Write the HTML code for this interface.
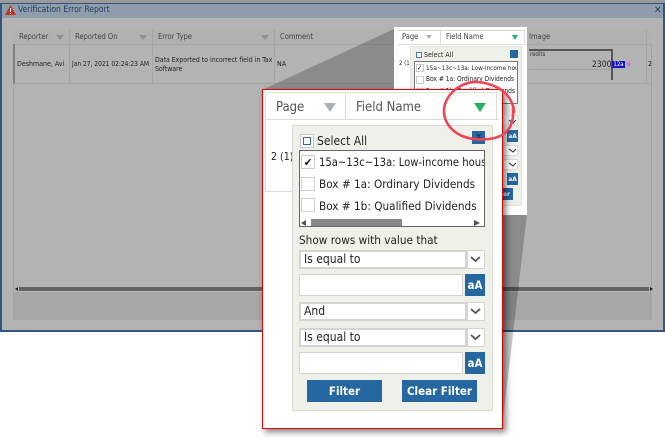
<!DOCTYPE html>
<html><head><meta charset="utf-8"><style>
html,body{margin:0;padding:0;background:#fff}
#p{position:relative;width:665px;height:438px;overflow:hidden;background:#fff;font-family:"DejaVu Sans Condensed","DejaVu Sans","Liberation Sans",sans-serif;font-stretch:condensed;color:#222}
#p div{position:absolute;box-sizing:border-box;white-space:nowrap}
.s{font-size:7.5px;color:#444}
.tri{width:0;height:0;border-left:4px solid transparent;border-right:4px solid transparent;border-top:5px solid #8e979c}
.sel{background:#fff;border:2px solid #d4d4d0;font-size:12px;line-height:15px;padding-left:3px;left:299px;width:168px;height:19px}
.arr{left:467px;width:18px;height:19px;background:#fff;border:1px solid #d4d4d0}
.inp{left:299px;width:164px;height:22px;background:#fff;border:1px solid #d4d4d0}
.aa{left:465px;width:20px;height:22px;background:#2567a0;color:#fff;font-weight:bold;font-size:11.5px;line-height:22px;text-align:center}
.btn{background:#2567a0;color:#fff;font-weight:bold;line-height:22px;text-align:center;height:22px;width:75px;top:380px;font-size:11.5px}
.cb{width:14px;height:14px;background:#fff;border:1px solid #ccc}
.saa{left:507px;width:11px;height:12px;background:#2567a0;color:#fff;font-size:6.5px;line-height:12px;text-align:center;font-weight:bold}
</style></head><body><div id="p">
<div style="left:0;top:0;width:665px;height:4px;background:#9a9a9a"></div>
<div style="left:0;top:3px;width:665px;height:329px;background:#b3b3b3;border:1px solid #33587f;border-width:1px 2px 2px 2px"></div>
<div style="left:2px;top:4px;width:661px;height:14px;background:#8f9dab"></div>
<svg style="position:absolute;left:5px;top:5px" width="11" height="10"><path d="M5.5 0L11 10H0Z" fill="#c4301c"/><rect x="5" y="3" width="1" height="4" fill="#fff"/><rect x="5" y="8" width="1" height="1" fill="#fff"/></svg>
<div style="left:18px;top:3px;line-height:14px;color:#1d3f66;font-size:8.5px">Verification Error Report</div>
<div style="left:654px;top:4px;font-size:10px;line-height:14px;color:#1d3f66;font-weight:bold">✕</div>

<div style="left:13px;top:29px;width:639px;height:291px;background:#b3b3b3;border:1px solid #a3a3a3"></div>
<div style="left:13px;top:29px;width:639px;height:16px;background:#b1b1b1;border-bottom:1px solid #a5a5a5"></div>
<div style="left:13px;top:44px;width:639px;height:40px;border-bottom:1px solid #a5a5a5;border-left:2px solid #808080"></div>
<div style="left:69px;top:29px;width:1px;height:55px;background:#a5a5a5"></div>
<div style="left:152px;top:29px;width:1px;height:55px;background:#a5a5a5"></div>
<div style="left:274px;top:29px;width:1px;height:55px;background:#a5a5a5"></div>
<div style="left:646px;top:29px;width:1px;height:55px;background:#a5a5a5"></div>
<div class="s" style="left:19px;top:32px">Reporter</div><div class="tri" style="left:56px;top:35px;border-top-color:#8b9396"></div>
<div class="s" style="left:75px;top:32px">Reported On</div><div class="tri" style="left:139px;top:35px;border-top-color:#8b9396"></div>
<div class="s" style="left:158px;top:32px">Error Type</div><div class="tri" style="left:261px;top:35px;border-top-color:#8b9396"></div>
<div class="s" style="left:280px;top:32px">Comment</div>
<div style="left:17px;top:60px;font-size:7px;color:#222">Deshmane, Avi</div>
<div style="left:72px;top:60px;font-size:6.6px;color:#222">Jan 27, 2021 02:24:23 AM</div>
<div style="left:155px;top:56px;font-size:6.9px;line-height:9px;color:#222">Data Exported to incorrect field in Tax<br>Software</div>
<div style="left:277px;top:60px;font-size:7px;color:#222">NA</div>
<div class="s" style="left:529px;top:32px">Image</div>
<div style="left:529px;top:49px;width:83px;height:2px;background:#555"></div>
<div style="left:611px;top:49px;width:2px;height:31px;background:#555"></div>
<div style="left:529px;top:69px;width:82px;height:1px;background:#a0a0a0"></div>
<div style="left:530px;top:51px;font-size:6px;color:#333">redits</div>
<div style="left:592px;top:60px;font-size:8.5px;color:#222">2300</div>
<div style="left:612px;top:61px;width:13px;height:7px;background:#1616b8;color:#fff;font-size:6px;line-height:7px;text-align:center">12a</div>
<div style="left:626px;top:60px;font-size:7px;color:#c060c0">≶</div>
<div style="left:648px;top:60px;font-size:7px;color:#222">2</div>

<div style="left:19px;top:287px;width:630px;height:4px;background:#636363"></div>
<svg style="position:absolute;left:15px;top:287px" width="640" height="5"><path d="M0 2L3 0V4Z M635 0L638 2L635 4Z" fill="#222"/></svg>
<div style="left:14px;top:292px;width:638px;height:28px;background:#a6a6a6"></div>

<!-- zoom wedges -->
<svg style="position:absolute;left:0;top:0" width="665" height="438">
<polygon points="394,29 262,90 394,90" fill="#000" fill-opacity=".22"/>
<polygon points="527,214 502,428 502,214" fill="#000" fill-opacity=".22"/>
</svg>

<!-- small popup -->
<div style="left:394px;top:27px;width:133px;height:188px;background:#fff"></div>
<div style="left:397px;top:30px;width:127px;height:1px;background:#d8d8d8"></div>
<div style="left:397px;top:44px;width:127px;height:1px;background:#dcdcdc"></div>
<div style="left:440px;top:30px;width:1px;height:14px;background:#dcdcdc"></div>
<div style="left:524px;top:30px;width:1px;height:14px;background:#dcdcdc"></div>
<div class="s" style="left:402px;top:32px">Page</div><div class="tri" style="left:426px;top:35px;border-left-width:3px;border-right-width:3px;border-top-width:4px;border-top-color:#a8b0b4"></div>
<div class="s" style="left:446px;top:32px">Field Name</div><div class="tri" style="left:512px;top:35px;border-top-color:#23b25f;border-left-width:3px;border-right-width:3px"></div>
<div style="left:399px;top:60px;font-size:6px">2 (1)</div>
<div style="left:410px;top:46px;width:112px;height:160px;background:#f0f0eb;border:1px solid #e4e4e0"></div>
<div style="left:416px;top:52px;width:6px;height:6px;background:#fff;border:1px solid #4a7bb0"></div>
<div style="left:424px;top:51px;font-size:7px;line-height:9px">Select All</div>
<div style="left:510px;top:50px;width:8px;height:8px;background:#2567a0"></div>
<div style="left:414px;top:61px;width:104px;height:43px;background:#fff;border:1px solid #777"></div>
<div style="left:416px;top:64px;width:8px;height:8px;background:#fff;border:1px solid #ccc;font-size:7px;line-height:7px">✓</div>
<div style="left:426px;top:64px;width:91px;overflow:hidden;font-size:6.4px;line-height:9px">15a~13c~13a: Low-income hous</div>
<div style="left:416px;top:76px;width:8px;height:8px;background:#fff;border:1px solid #ccc"></div>
<div style="left:426px;top:75px;font-size:6.6px;line-height:9px">Box # 1a: Ordinary Dividends</div>
<div style="left:416px;top:88px;width:8px;height:8px;background:#fff;border:1px solid #ccc"></div>
<div style="left:426px;top:87px;font-size:6.6px;line-height:9px">Box # 1b: Qualified Dividends</div>
<div style="left:503px;top:115px;width:5px;height:9px;background:#fff"></div><div style="left:508px;top:115px;width:10px;height:11px;background:#fff;border:1px solid #ddd"></div>
<div class="saa" style="top:130px">aA</div>
<div style="left:503px;top:145px;width:15px;height:11px;background:#fff;border:1px solid #ddd"></div>
<div style="left:503px;top:159px;width:15px;height:11px;background:#fff;border:1px solid #ddd"></div>
<div class="saa" style="top:173px">aA</div>
<div style="left:503px;top:188px;width:10px;height:12px;background:#2567a0;color:#fff;font-size:6.5px;line-height:12px;font-weight:bold">er</div>
<svg style="position:absolute;left:505px;top:115px" width="15" height="60" fill="none" stroke="#444" stroke-width="1.2"><path d="M4 5L8 8L11 5M4 34L8 37L11 34M4 48L8 51L11 48"/></svg>

<!-- large popup -->
<div style="left:262px;top:89px;width:241px;height:340px;background:#fff;border:1px solid #e60000;box-shadow:3px 3px 6px rgba(0,0,0,.5)"></div>
<div style="left:265px;top:92px;width:231px;height:1px;background:#e0e0e0"></div>
<div style="left:265px;top:119px;width:234px;height:1px;background:#dcdcdc"></div>
<div style="left:265px;top:92px;width:1px;height:100px;background:#e0e0e0"></div>
<div style="left:345px;top:92px;width:1px;height:27px;background:#dcdcdc"></div>
<div style="left:496px;top:92px;width:1px;height:27px;background:#dcdcdc"></div>
<div style="left:265px;top:191px;width:28px;height:1px;background:#dcdcdc"></div>
<div style="left:276px;top:99px;font-size:13px;line-height:17px;color:#555">Page</div>
<div class="tri" style="left:324px;top:103px;border-left-width:6px;border-right-width:6px;border-top-width:9px;border-top-color:#a8b0b4"></div>
<div style="left:356px;top:99px;font-size:13px;line-height:17px;color:#555">Field Name</div>
<div class="tri" style="left:474px;top:103px;border-left-width:6px;border-right-width:6px;border-top-width:9px;border-top-color:#23b25f"></div>
<div style="left:271px;top:150px;font-size:10.5px;line-height:15px;color:#222">2 (1)</div>

<div style="left:292px;top:125px;width:201px;height:286px;background:#f0f0eb;border:1px solid #d8d8d4"></div>
<div style="left:300px;top:134px;width:14px;height:14px;background:#fff;border:1px solid #c8c8c8"></div>
<div style="left:303px;top:137px;width:8px;height:8px;background:#fff;border:1px solid #2f6ca8"></div>
<div style="left:317px;top:134px;font-size:12px;line-height:15px">Select All</div>
<div style="left:472px;top:131px;width:13px;height:13px;background:#2567a0;color:#222;font-size:9px;line-height:13px;text-align:center">×</div>
<div style="left:299px;top:150px;width:186px;height:77px;background:#fff;border:1px solid #666"></div>
<div class="cb" style="left:301px;top:155px;color:#111;font-size:11px;line-height:13px;text-align:center">✔</div>
<div style="left:319px;top:155px;width:165px;overflow:hidden;font-size:11.2px;line-height:16px">15a~13c~13a: Low-income hous</div>
<div class="cb" style="left:301px;top:177px"></div>
<div style="left:319px;top:176px;font-size:11.7px;line-height:16px">Box # 1a: Ordinary Dividends</div>
<div class="cb" style="left:301px;top:198px"></div>
<div style="left:319px;top:198px;font-size:11.7px;line-height:16px">Box # 1b: Qualified Dividends</div>
<div style="left:311px;top:219px;width:91px;height:7px;background:#888"></div>
<svg style="position:absolute;left:300px;top:219px" width="185" height="8"><path d="M6 1L1 4L6 7Z M174 1L180 4L174 7Z" fill="#555"/></svg>
<div style="left:299px;top:232px;font-size:11.7px;line-height:16px">Show rows with value that</div>

<div class="sel" style="top:250px">Is equal to</div><div class="arr" style="top:250px"></div>
<div class="inp" style="top:274px"></div><div class="aa" style="top:274px">aA</div>
<div class="sel" style="top:302px">And</div><div class="arr" style="top:302px"></div>
<div class="sel" style="top:328px">Is equal to</div><div class="arr" style="top:328px"></div>
<div class="inp" style="top:352px"></div><div class="aa" style="top:352px">aA</div>
<svg style="position:absolute;left:467px;top:250px" width="18" height="100" fill="none" stroke="#555" stroke-width="1.8"><path d="M4 7L8.5 11L13 7M4 59L8.5 63L13 59M4 85L8.5 89L13 85"/></svg>
<div class="btn" style="left:307px">Filter</div>
<div class="btn" style="left:402px">Clear Filter</div>

<svg style="position:absolute;left:0;top:0" width="665" height="438" fill="none"><path d="M514 112C513 95 498 84 478 82C462 81 449 92 445 104C441 118 449 130 462 136C475 141 495 141 505 133C511 128 514 120 513 108" stroke="#ee4455" stroke-width="2.6" stroke-linecap="round"/></svg>
</div></body></html>
